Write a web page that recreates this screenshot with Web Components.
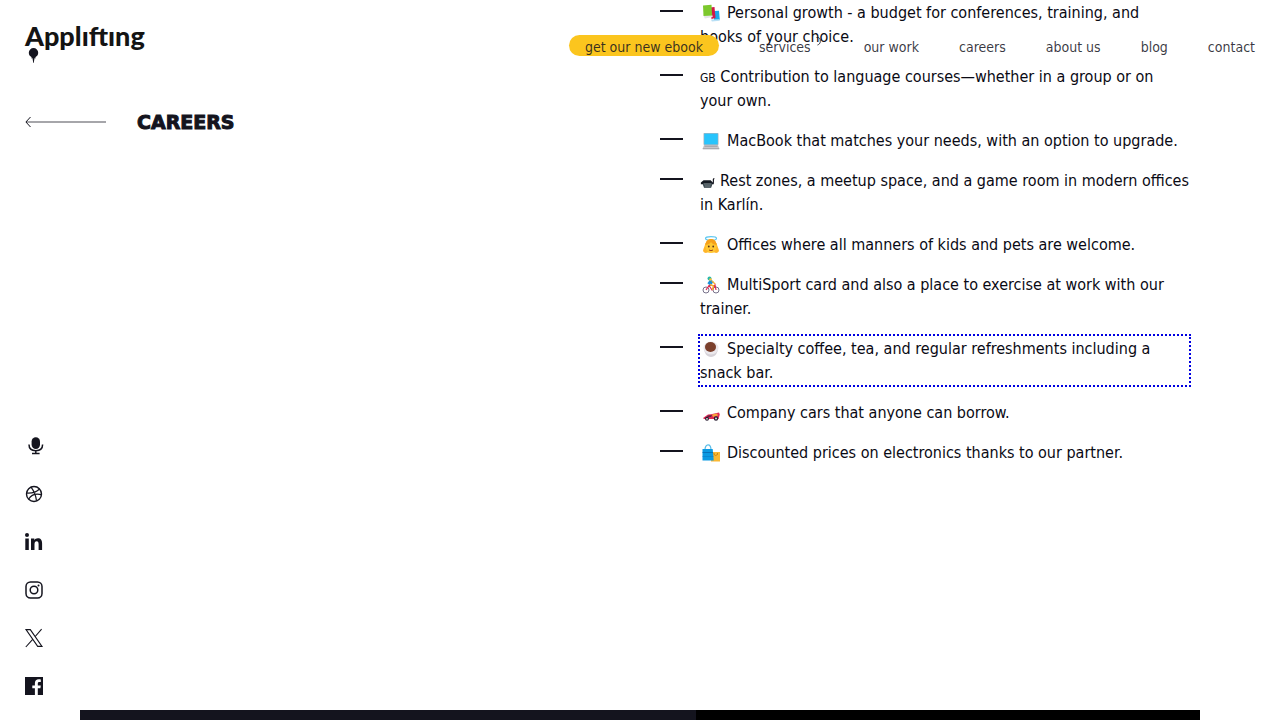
<!DOCTYPE html>
<html lang="en">
<head>
<meta charset="utf-8">
<meta name="viewport" content="width=device-width, initial-scale=1">
<title>Careers | Applifting</title>
<style>
  html { height: 100%; }
  body { margin: 0; min-height: 100%; display: flex; background: #fff; color: #14141e;
    font: 16px/24px "DejaVu Sans Condensed", "DejaVu Sans", sans-serif; }
  careers-page { flex: 1; }
</style>
</head>
<body>
<careers-page></careers-page>

<template id="t-page">
  <style>
    :host { display: flex; flex-direction: column; position: relative; min-width: 0; }
    site-header { position: absolute; top: 0; left: 0; right: 0; z-index: 2; }
    main { flex: 1; display: grid; grid-template-columns: 1fr 1fr; }
    .side { display: flex; flex-direction: column; justify-content: space-between; padding: 108px 24px 14px; }
    ul { list-style: none; margin: 0; padding: 0 91px 24px 20px; display: flex; flex-direction: column; gap: 16px; }
    .next { display: grid; grid-template-columns: 55fr 45fr; height: 10px; margin: 0 80px; background: #000; }
    .next div { background: #14141e; }
  </style>
  <site-header></site-header>
  <main>
    <div class="side">
      <back-title href="#careers">CAREERS</back-title>
      <social-links></social-links>
    </div>
    <ul>
      <li><benefit-item icon="books">Personal growth - a budget for conferences, training, and books&nbsp;of your choice.</benefit-item></li>
      <li><benefit-item><small slot="mark">GB</small> Contribution to language courses—whether in a group or on your&nbsp;own.</benefit-item></li>
      <li><benefit-item icon="laptop">MacBook that matches your needs, with an option to upgrade.</benefit-item></li>
      <li><benefit-item icon="couch" compact>Rest zones, a meetup space, and a game room in modern offices in Karlín.</benefit-item></li>
      <li><benefit-item icon="angel">Offices where all manners of kids and pets are welcome.</benefit-item></li>
      <li><benefit-item icon="cyclist">MultiSport card and also a place to exercise at work with our trainer.</benefit-item></li>
      <li><benefit-item icon="coffee" selected>Specialty coffee, tea, and regular refreshments including a snack bar.</benefit-item></li>
      <li><benefit-item icon="car">Company cars that anyone can borrow.</benefit-item></li>
      <li><benefit-item icon="bags">Discounted prices on electronics thanks to our partner.</benefit-item></li>
    </ul>
  </main>
  <div class="next"><div></div></div>
</template>

<template id="t-header">
  <style>
    :host { display: flex; justify-content: space-between; align-items: flex-start; padding: 24px 25px 0; }
    .logo { display: flex; flex-direction: column; color: #141414; text-decoration: none;
      font: 900 27px/24px Lato, sans-serif; }
    .logo svg { display: block; margin-left: 3px; }
    nav { display: flex; align-items: center; gap: 40px; padding-top: 11px; }
  </style>
  <a class="logo" href="#home">Applıftıng
    <svg width="11" height="15" viewBox="0 0 11 15" aria-hidden="true"><path fill="#14141e" d="M5.500 0A4.700 4.700 0 0 0 .8 4.700c0 2 1.200 3.600 2.600 4.300l.5 2 .5-1.300L5.300 15h.4l.9-5.300.5 1.300.5-2c1.400-.7 2.600-2.300 2.600-4.300A4.700 4.700 0 0 0 5.500 0z"/></svg>
  </a>
  <nav aria-label="Main">
    <nav-link href="#ebook" pill>get our new ebook</nav-link>
    <nav-link href="#services" menu>services</nav-link>
    <nav-link href="#work">our work</nav-link>
    <nav-link href="#careers">careers</nav-link>
    <nav-link href="#about">about us</nav-link>
    <nav-link href="#blog">blog</nav-link>
    <nav-link href="#contact">contact</nav-link>
  </nav>
</template>

<template id="t-link">
  <style>
    :host { display: block; font-size: 14px; line-height: 21px; white-space: nowrap; }
    a { display: flex; height: 21px; color: rgba(20, 20, 30, .85); text-decoration: none; }
    :host([pill]) a { background: #fbc51e; border-radius: 11px; padding: 0 16px; }
    svg { display: none; margin-left: 5px; }
    :host([menu]) svg { display: block; }
    slot { display: block; padding-top: 2px; line-height: 21px; }
  </style>
  <a><slot></slot><svg width="8" height="12" viewBox="0 0 8 12" aria-hidden="true"><path d="M.5 2.500C3.500 2 4.500 4 4.300 6.500 4.200 8.500 3 9.500 1.500 10" fill="none" stroke="currentColor"/></svg></a>
</template>

<template id="t-back">
  <style>
    :host { display: block; }
    a { display: flex; align-items: center; gap: 30px; color: #14141e; text-decoration: none; }
    h1 { margin: 0; font: 700 19px/28px "DejaVu Sans", sans-serif; -webkit-text-stroke: 1px #14141e; }
    svg { margin-left: 1px; }
  </style>
  <a><svg width="82" height="12" viewBox="0 0 82 12" fill="none" stroke="#14141e" aria-hidden="true"><path d="M5.500 1L.9 6l4.600 5"/><path stroke-opacity=".75" d="M1 6h80" stroke-width="1.200"/></svg><h1><slot></slot></h1></a>
</template>

<template id="t-social">
  <style>
    :host { display: flex; flex-direction: column; align-items: flex-start; gap: 28px; }
    a { display: block; height: 20px; color: #14141e; }
    svg { display: block; }
  </style>
  <a href="#podcast" aria-label="Podcast"><svg width="20" height="20" viewBox="0 0 20 20" fill="none" stroke="currentColor" stroke-width="1.500"><rect x="7.600" y="1.200" width="8.400" height="11.800" rx="4.200" fill="currentColor" stroke="none"/><path d="M5 8.500c0 4 2.800 6.200 6.800 6.200s6.800-2.200 6.800-6.200M11.800 14.500v3M8 17.600h7.600"/></svg></a>
  <a href="#dribbble" aria-label="Dribbble"><svg width="20" height="20" viewBox="0 0 20 20" fill="none" stroke="currentColor" stroke-width="1.200"><circle cx="10" cy="10" r="7.500" stroke-width="1.400"/><path d="M2.500 9c5 .3 10-.8 13-4M7 3.200c3 3.800 4.800 8 5.500 13.600M4.600 15.200C7 11 11.500 9.300 17.400 10.600"/></svg></a>
  <a href="#linkedin" aria-label="LinkedIn"><svg width="20" height="20" viewBox="0 0 20 20" fill="currentColor"><circle cx="3" cy="3.100" r="2"/><path d="M1.300 6.600h3.500V18H1.300zM7 6.600h3.300v1.600c.7-1.200 1.900-1.900 3.500-1.900 3.200 0 4.300 2 4.300 5.200V18h-3.500v-5.800c0-1.800-.5-2.900-1.900-2.900-1.500 0-2.200 1.100-2.200 2.900V18H7z"/></svg></a>
  <a href="#instagram" aria-label="Instagram"><svg width="20" height="20" viewBox="0 0 20 20" fill="none" stroke="currentColor" stroke-width="1.500"><rect x="2" y="2" width="16" height="16" rx="4.500"/><circle cx="10" cy="10" r="3.800"/><circle cx="14.500" cy="5.500" r="1" fill="currentColor" stroke="none"/></svg></a>
  <a href="#x" aria-label="X"><svg width="20" height="20" viewBox="0 0 20 20" fill="none" stroke="currentColor" stroke-width="1.100"><path d="M2 1.600h4.300L18 18.400h-4.300zM17.600 1.200L10.800 9M8.900 11.200L1.800 19"/></svg></a>
  <a href="#facebook" aria-label="Facebook"><svg width="20" height="20" viewBox="0 0 20 20"><path fill="currentColor" d="M1 1h18v18h-5.200v-6.700h2.600l.4-2.900h-3V7.600c0-.9.400-1.500 1.500-1.500h1.500V3.500c-.5-.1-1.200-.2-2.100-.2-2.300 0-3.800 1.400-3.800 3.900v2.200H8.300v2.900h2.600V19H1z"/></svg></a>
</template>

<template id="t-benefit">
  <style>
    :host { display: grid; grid-template-columns: 23px 1fr; column-gap: 17px; color: #0a0a14; }
    .dash { height: 2px; margin-top: 10px; background: #14141e; }
    p { margin: 0 0 -1px; padding-top: 1px; }
    :host([selected]) p { outline: 2px dotted #0000e0; }
    .icon svg { display: inline-block; width: 18px; height: 18px; margin: 0 7px 0 2px; vertical-align: -4px; }
    :host([compact]) .icon svg { width: 16px; height: 16px; margin: 0 4px 0 0; }
    .icon:empty { display: none; }
    ::slotted(small) { font-size: 12px; line-height: 16px; }
  </style>
  <span class="dash"></span>
  <p><span class="icon"></span><slot name="mark"></slot><slot></slot></p>
</template>

<script>
const ICONS = {
  books: '<path fill="#1ba8e8" d="M12 7l5-.2.800 9-5.800 1z"/><path fill="#b8dff5" d="M9 15.500l8.500-.3.300 1.600-8 .8z"/><path fill="#d01848" d="M8 3.500l4.500-.5 1 11-4 1z"/><path fill="#e4e4e8" d="M1.500 11.500l8.500-1 .8 2.500-8 1.500z"/><path fill="#7cc82c" d="M1 1.500l8.500-.7.700 10.700L1.500 12z"/>',
  laptop: '<rect x="1.500" y="1" width="15" height="12" rx=".7" fill="#b0b4bc"/><rect x="2.200" y="1.600" width="13.600" height="10.800" fill="#28c4fc"/><path fill="#c8c8cc" d="M2 13h14l1.500 4H.5z"/><path stroke="#92929a" stroke-width=".8" d="M2.500 14.200h13M.8 16.800h16.400"/>',
  couch: '<path fill="#141a22" d="M1 9.500l3-2.500h8l2.500 2.500 1 2H1z"/><path fill="#26343c" d="M3 11h11l-1.500 4.500h-8z"/><path stroke="#14141e" stroke-width="1.200" d="M15 11V6l1-1"/><path stroke="#cfd8d8" stroke-width=".7" d="M4 11.200h9M5 13.500h7"/>',
  angel: '<ellipse cx="9" cy="2.500" rx="5.500" ry="1.800" fill="none" stroke="#60c8f0" stroke-width="1.200"/><path fill="#ffb52a" d="M3.500 7c-1 4-2 5-2.500 8 1 2 3 2.500 4.500 1.500h7c1.500 1 3.500.5 4.500-1.500-.5-3-1.500-4-2.500-8z"/><ellipse cx="9" cy="10" rx="5.500" ry="7" fill="#ffc832"/><path fill="#f6a01a" d="M3.500 9c0-4 2.500-6 5.500-6s5.500 2 5.500 6c-3-.5-4.500-1.500-5.500-3-1 1.500-2.500 2.500-5.500 3z"/><circle cx="6.800" cy="10.500" r=".9" fill="#5a3420"/><circle cx="11.200" cy="10.500" r=".9" fill="#5a3420"/><path d="M7 14q2 1.300 4 0" fill="none" stroke="#a04418"/>',
  cyclist: '<g fill="none"><circle cx="4" cy="14" r="3" stroke="#77718a"/><circle cx="14" cy="14" r="3" stroke="#77718a"/><path stroke="#e02850" stroke-width="1.200" d="M4 14l3-4.500 3 4.500 3-5 1 5M7 9.500h6"/><path stroke="#1890d8" stroke-width="4" d="M10 4.500L7 8.500"/><path stroke="#f4b030" stroke-width="1.400" d="M8 8.500l3.500 1.500-1 4M10 5l3 3"/></g><circle cx="7.500" cy="2.500" r="2" fill="#28b8a8"/><circle cx="8.500" cy="3.500" r="1.300" fill="#fcc23c"/>',
  coffee: '<path fill="#d6d2d8" d="M2 8h14c0 5-3 9-7 9S2 13 2 8z"/><ellipse cx="9" cy="8" rx="7.500" ry="6.500" fill="#ebe8ec"/><ellipse cx="8.500" cy="7" rx="5.500" ry="5" fill="#7b402c"/>',
  car: '<path fill="#e02856" d="M1 14l5-3.500 3-.2 8-1.800.8 2-1.300 4.500H2z"/><path fill="#f6a43c" d="M10 10.500l5-1 1 2-5 1.500z"/><path fill="#5c2840" d="M6 11.500l4-.5-1 2H5z"/><circle cx="5" cy="14.800" r="2" fill="#281c30"/><circle cx="14" cy="14.500" r="2.200" fill="#281c30"/><circle cx="5" cy="14.800" r=".9" fill="#ddd"/><circle cx="14" cy="14.500" r="1" fill="#ddd"/>',
  bags: '<rect x="9" y="8" width="9" height="9.500" fill="#fbb832"/><path d="M12 9v1.500q1.500 2 3.500 0V9" fill="none" stroke="#c07810" stroke-width=".8"/><path d="M3 6C3-.8 9 -.8 9 6" fill="none" stroke="#58bce8" stroke-width="1.200"/><path fill="#0c9ae2" d="M.5 5h10.200l1 11.500H.5z"/><path stroke="#0868b0" d="M.5 8.500h10.500" stroke-width=".8"/><path stroke="#0a7cc6" d="M.5 12.500h11" stroke-width=".6"/>'
};

class Base extends HTMLElement {
  connectedCallback() {
    if (this.shadowRoot) return;
    const template = document.getElementById(this.constructor.template);
    this.attachShadow({ mode: 'open' }).append(template.content.cloneNode(true));
    this.setup();
  }
  setup() {}
}
class LinkBase extends Base {
  setup() { this.shadowRoot.querySelector('a').href = this.getAttribute('href'); }
}
class NavLink extends LinkBase { static template = 't-link'; }
class BackTitle extends LinkBase { static template = 't-back'; }
class SocialLinks extends Base { static template = 't-social'; }
class SiteHeader extends Base { static template = 't-header'; }
class BenefitItem extends Base {
  static template = 't-benefit';
  setup() {
    const icon = ICONS[this.getAttribute('icon')];
    if (icon) this.shadowRoot.querySelector('.icon').innerHTML = `<svg viewBox="0 0 18 18" aria-hidden="true">${icon}</svg>`;
  }
}
class CareersPage extends Base { static template = 't-page'; }

customElements.define('nav-link', NavLink);
customElements.define('back-title', BackTitle);
customElements.define('social-links', SocialLinks);
customElements.define('site-header', SiteHeader);
customElements.define('benefit-item', BenefitItem);
customElements.define('careers-page', CareersPage);
</script>
</body>
</html>
